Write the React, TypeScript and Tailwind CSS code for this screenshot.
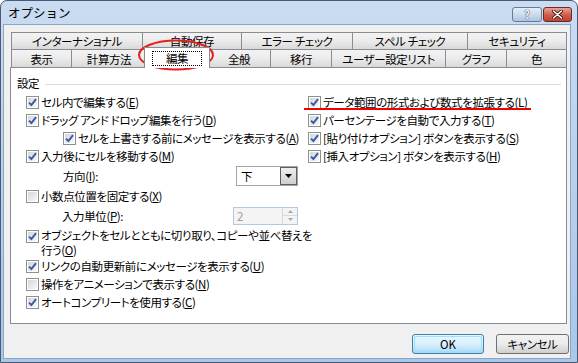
import React from "react";

function Check({ on }: { on: boolean }) {
  return (
    <span className="w-[13px] h-[13px] shrink-0 border border-[#8e8f8f] bg-white p-px flex">
      <span className="flex-1 bg-linear-to-br from-[#d4d6d9] to-[#f8f8f8] flex items-center justify-center">
        {on && (
          <svg width="9" height="9" viewBox="0 0 9 9">
            <path d="M1 4.6 L3.4 7 L8 1.2" fill="none" stroke="#3b5aa6" strokeWidth="2" />
          </svg>
        )}
      </span>
    </span>
  );
}

function Item({ on, children, className = "" }: { on: boolean; children: React.ReactNode; className?: string }) {
  return (
    <div className={"flex items-center h-[18px] " + className}>
      <Check on={on} />
      <span className="ml-[2px] whitespace-nowrap">{children}</span>
    </div>
  );
}

function Key({ k }: { k: string }) {
  return (
    <>
      (<span className="underline">{k}</span>)
    </>
  );
}

const row1 = [
  { label: "インターナショナル", w: "w-[132px]" },
  { label: "自動保存", w: "w-[100px]" },
  { label: "エラー チェック", w: "w-[112px]" },
  { label: "スペル チェック", w: "w-[116px]" },
  { label: "セキュリティ", w: "w-[100px]" },
];

const tabBase =
  "h-full border border-b-0 border-[#898c95] bg-linear-to-b from-[#f3f3f3] via-[#ebebeb] to-[#d9d9d9] flex items-center justify-center whitespace-nowrap";

export default function App() {
  return (
    <div className="relative w-[578px] h-[363px] flex flex-col rounded-t-[7px] border border-[#4b5a70] bg-linear-to-b from-[#cadcf2] via-[#b8d0ec] to-[#a9c7ea] text-[11.5px] leading-[14px] tracking-[-0.4px] text-black font-['Noto_Sans_CJK_JP',sans-serif] [font-feature-settings:'palt'] overflow-hidden">
      {/* title bar */}
      <div className="h-[23px] shrink-0 flex items-start pl-[7px] pr-[5px]">
        <span className="mt-[5px] text-[12.5px] leading-[14px] tracking-normal [font-feature-settings:normal]">オプション</span>
        <div className="ml-auto mt-[6px] flex gap-px">
          <div className="w-[30px] h-[15px] rounded-[3px] border border-[#6a7b95] bg-linear-to-b from-[#e6eef8] via-[#ccdbee] to-[#aec4e2] flex items-center justify-center">
            <span className="text-[11px] leading-none font-bold text-[#f4f7fb] [text-shadow:0_0_1px_#2d3c55,0_0_1px_#2d3c55]">?</span>
          </div>
          <div className="w-[29px] h-[15px] rounded-[3px] border border-[#6b2b25] bg-linear-to-b from-[#e8a494] via-[#d2604f] to-[#c13f2f] flex items-center justify-center">
            <svg width="11" height="9" viewBox="0 0 11 9">
              <path d="M1.5 1 L9.5 8 M9.5 1 L1.5 8" stroke="#3a1410" strokeWidth="3.2" strokeLinecap="round" />
              <path d="M1.5 1 L9.5 8 M9.5 1 L1.5 8" stroke="#ffffff" strokeWidth="1.6" strokeLinecap="round" />
            </svg>
          </div>
        </div>
      </div>

      {/* dialog body */}
      <div className="flex-1 ml-[2px] mr-[6px] mb-[3px] bg-[#f0f0f0] border border-[#8ba6c4] flex flex-col pt-[7px]">
        {/* tabs back row */}
        <div className="ml-[6px] mr-[3px] pl-px h-[17px] flex">
          {row1.map((t, i) => (
            <div key={t.label} className={tabBase + " " + t.w + (i > 0 ? " -ml-px" : "")}>
              {t.label}
            </div>
          ))}
        </div>
        {/* tabs front row */}
        <div className="ml-[6px] mr-[3px] pl-px h-[18px] flex items-end">
          <div className={tabBase + " w-[61px]"}>表示</div>
          <div className={tabBase + " w-[76px] -ml-px"}>計算方法</div>
          <div className="relative z-10 -ml-[3px] w-[66px] h-[21px] -mb-px border border-b-0 border-[#898c95] bg-white flex items-start justify-center pt-[3px]">
            <span className="border border-dotted border-black px-[13px] h-[15px] leading-[13px]">編集</span>
          </div>
          <div className={tabBase + " w-[64px] -ml-[3px]"}>全般</div>
          <div className={tabBase + " w-[62px] -ml-px"}>移行</div>
          <div className={tabBase + " w-[115px] -ml-px"}>ユーザー設定リスト</div>
          <div className={tabBase + " w-[62px] -ml-px"}>グラフ</div>
          <div className={tabBase + " w-[61px] -ml-px"}>色</div>
        </div>

        {/* panel */}
        <div className="ml-[6px] mr-[3px] h-[257px] border border-[#898c95] bg-white pt-[8px] pl-[6px] pr-[5px]">
          <div className="flex items-center h-[14px]">
            <span>設定</span>
            <span className="flex-1 ml-[6px] mt-[2px] border-t border-[#d5dfe5]" />
          </div>
          <div className="mt-[3px] ml-[9px] flex">
            <div className="w-[282px] flex flex-col">
              <Item on>
                セル内で編集する<Key k="E" />
              </Item>
              <Item on>
                ドラッグ アンド ドロップ編集を行う<Key k="D" />
              </Item>
              <Item on className="pl-[37px]">
                セルを上書きする前にメッセージを表示する<Key k="A" />
              </Item>
              <Item on>
                入力後にセルを移動する<Key k="M" />
              </Item>
              <div className="h-[22px] flex items-center pl-[37px]">
                <span className="w-[173px]">
                  方向<Key k="I" />:
                </span>
                <div className="w-[62px] h-[20px] border border-[#a5a5a5] bg-white flex items-center">
                  <span className="pl-[4px] flex-1">下</span>
                  <div className="w-[17px] h-[18px] border border-[#5e5e5e] bg-linear-to-b from-[#eeeeee] to-[#cfcfcf] flex items-center justify-center">
                    <svg width="7" height="4" viewBox="0 0 7 4">
                      <path d="M0 0 H7 L3.5 4 Z" fill="#000" />
                    </svg>
                  </div>
                </div>
              </div>
              <Item on={false}>
                小数点位置を固定する<Key k="X" />
              </Item>
              <div className="h-[21px] flex items-center pl-[36px]">
                <span className="w-[171px]">
                  入力単位<Key k="P" />:
                </span>
                <div className="w-[65px] h-[18px] border border-[#b3c9e3] bg-[#f4f4f4] flex items-center">
                  <span className="pl-[3px] flex-1 text-[#a0a0a0]">2</span>
                  <div className="w-[15px] h-[16px] flex flex-col border-l border-[#d9d9d9]">
                    <div className="flex-1 flex items-center justify-center border-b border-[#d9d9d9]">
                      <svg width="5" height="3" viewBox="0 0 5 3">
                        <path d="M2.5 0 L5 3 H0 Z" fill="#a8a8a8" />
                      </svg>
                    </div>
                    <div className="flex-1 flex items-center justify-center">
                      <svg width="5" height="3" viewBox="0 0 5 3">
                        <path d="M0 0 H5 L2.5 3 Z" fill="#a8a8a8" />
                      </svg>
                    </div>
                  </div>
                </div>
              </div>
              <div className="flex items-start pt-[2px] h-[31px]">
                <span className="mt-[2px]">
                  <Check on />
                </span>
                <span className="ml-[2px] whitespace-nowrap leading-[15px]">
                  オブジェクトをセルとともに切り取り、コピーや並べ替えを
                  <br />
                  行う<Key k="O" />
                </span>
              </div>
              <Item on>
                リンクの自動更新前にメッセージを表示する<Key k="U" />
              </Item>
              <Item on={false}>
                操作をアニメーションで表示する<Key k="N" />
              </Item>
              <Item on>
                オートコンプリートを使用する<Key k="C" />
              </Item>
            </div>
            <div className="flex flex-col">
              <Item on>
                データ範囲の形式および数式を拡張する<Key k="L" />
              </Item>
              <Item on>
                パーセンテージを自動で入力する<Key k="T" />
              </Item>
              <Item on>
                [貼り付けオプション] ボタンを表示する<Key k="S" />
              </Item>
              <Item on>
                [挿入オプション] ボタンを表示する<Key k="H" />
              </Item>
            </div>
          </div>
        </div>

        {/* buttons */}
        <div className="mt-[10px] pr-px flex justify-end gap-[12px]">
          <div className="w-[72px] h-[20px] rounded-[3px] border border-[#3c7fb1] bg-linear-to-b from-[#eaf6fd] via-[#d9f0fc] to-[#a7d9f5] p-px">
            <div className="h-full rounded-[2px] border border-[#9ce0fb] flex items-center justify-center tracking-normal [font-feature-settings:normal]">
              OK
            </div>
          </div>
          <div className="w-[73px] h-[20px] rounded-[3px] border border-[#707070] bg-linear-to-b from-[#f2f2f2] via-[#ebebeb] to-[#cfcfcf] flex items-center justify-center">
            キャンセル
          </div>
        </div>
      </div>

      {/* red annotations */}
      <svg className="absolute left-[136px] top-[38px]" width="78" height="32" viewBox="0 0 78 32">
        <ellipse cx="39" cy="16" rx="37" ry="14.5" fill="none" stroke="#e3201b" strokeWidth="2" />
      </svg>
      <div className="absolute left-[303px] top-[107px] w-[227px] h-[2px] bg-[#f00000]" />
    </div>
  );
}
